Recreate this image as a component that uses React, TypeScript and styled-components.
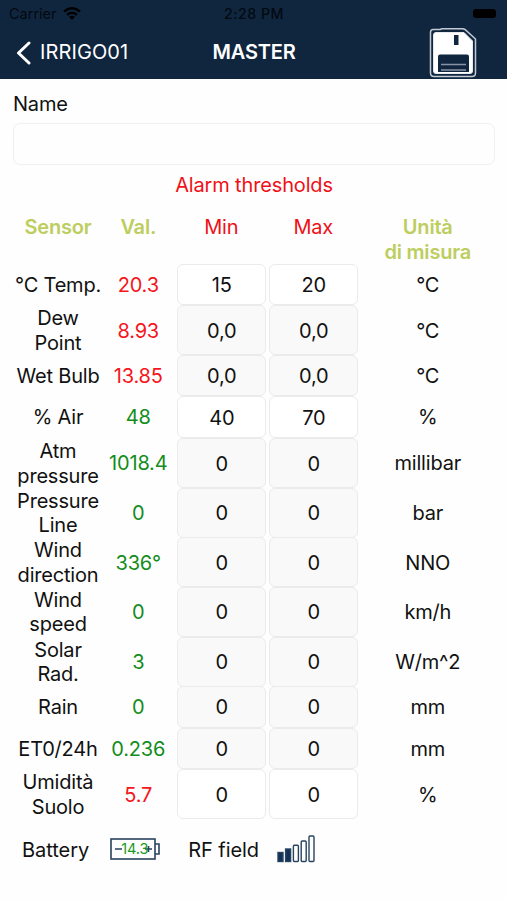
import React from "react";
import styled, { createGlobalStyle } from "styled-components";

const GlobalStyle = createGlobalStyle`
  * { box-sizing: border-box; }
  body {
    margin: 0;
    background: #fefefe;
    color: #111;
    font-family: Inter, "Liberation Sans", sans-serif;
    font-size: 20px;
    line-height: 24.6px;
    letter-spacing: -0.2px;
  }
`;

const Screen = styled.div`
  width: 507px;
  height: 900px;
  overflow: hidden;
  background: #fefefe;
`;

const Header = styled.header`
  height: 79px;
  background: #10263f;
`;

const StatusBar = styled.div`
  display: grid;
  grid-template-columns: 1fr auto 1fr;
  align-items: center;
  height: 26px;
  padding: 1px 8px 0 9px;
  color: #030910;
  font-size: 14.5px;
  line-height: 18px;
  letter-spacing: 0;
`;

const Carrier = styled.div`
  display: flex;
  align-items: center;
  gap: 6px;
`;

const Clock = styled.div`
  font-weight: 500;
  font-size: 14.2px;
  letter-spacing: 0.5px;
`;

const BatteryPill = styled.div`
  justify-self: end;
  width: 23px;
  height: 9px;
  margin-right: 3px;
  margin-top: -1px;
  border-radius: 3px;
  background: #000;
`;

const NavBar = styled.nav`
  display: grid;
  grid-template-columns: 1fr auto 1fr;
  align-items: center;
  height: 53px;
  padding: 0 30px 0 16px;
  color: #fff;
`;

const Back = styled.button`
  display: flex;
  align-items: center;
  gap: 9px;
  padding: 0;
  border: 0;
  background: none;
  color: inherit;
  font: inherit;
  letter-spacing: 0.1px;
`;

const Title = styled.h1`
  margin: 0 0 0 15px;
  font-size: 20px;
  font-weight: 600;
  letter-spacing: -0.2px;
`;

const SaveButton = styled.button`
  justify-self: end;
  display: flex;
  padding: 0;
  border: 0;
  background: none;
`;

const Form = styled.main`
  padding: 13px 12px 0 13px;
`;

const NameLabel = styled.label`
  display: block;
  height: 31px;
`;

const NameInput = styled.input`
  display: block;
  width: 100%;
  height: 42px;
  padding: 0 10px;
  border: 1px solid #f0f0f0;
  border-radius: 7px;
  background: #fefefe;
  font: inherit;
`;

const SectionTitle = styled.div`
  height: 50px;
  padding-top: 8px;
  text-align: center;
  color: #f01018;
  letter-spacing: -0.15px;
`;

const Row = styled.div<{ $h: number }>`
  display: grid;
  grid-template-columns: 90px 73.5px 92px 92px 134.5px;
  height: ${(p) => p.$h}px;
  align-items: center;
  text-align: center;
`;

const HeadRow = styled(Row)`
  align-items: start;
`;

const Heading = styled.div<{ $tone: "lime" | "red" }>`
  padding-right: ${(p) => (p.$tone === "red" ? "2.5px" : 0)};
  color: ${(p) => (p.$tone === "red" ? "#f01018" : "#bdcd5e")};
  font-weight: ${(p) => (p.$tone === "red" ? 400 : 600)};
  white-space: pre-line;
`;

const ValueHeading = styled(Heading)`
  padding-right: 3px;
`;

const Sensor = styled.div`
  padding-top: 1px;
  white-space: pre-line;
`;

const Value = styled.div<{ $alarm?: boolean }>`
  padding: 1px 3px 0 0;
  white-space: nowrap;
  color: ${(p) => (p.$alarm ? "#f5151b" : "#128d1a")};
`;

const Threshold = styled.input<{ $editable?: boolean }>`
  width: 89.5px;
  height: 100%;
  padding: 1px 0 0 1px;
  border: 1px solid #ebebeb;
  border-radius: 6px;
  background: ${(p) => (p.$editable ? "#fff" : "#f9f9f9")};
  color: #111;
  font: inherit;
  letter-spacing: inherit;
  text-align: center;
`;

const Unit = styled.div`
  padding-top: 1px;
`;

const Footer = styled.footer`
  display: flex;
  align-items: center;
  height: 60px;
  padding: 2px 0 0 9px;
  letter-spacing: -0.05px;
`;

const BatteryGauge = styled.div`
  display: grid;
  place-items: center start;
  margin: -2px 28px 0 21px;

  & > * { grid-area: 1 / 1; }
`;

const BatteryValue = styled.span`
  margin-left: 11px;
  color: #189a20;
  font-size: 14.5px;
  line-height: 20px;
`;

const Signal = styled.svg`
  margin: -2px 0 0 18px;
`;

type Reading = {
  name: string;
  value: string;
  min: string;
  max: string;
  unit: string;
  alarm?: boolean;
  editable?: boolean;
};

const readings: Reading[] = [
  { name: "°C Temp.", value: "20.3", min: "15", max: "20", unit: "°C", alarm: true, editable: true },
  { name: "Dew\nPoint", value: "8.93", min: "0,0", max: "0,0", unit: "°C", alarm: true },
  { name: "Wet Bulb", value: "13.85", min: "0,0", max: "0,0", unit: "°C", alarm: true },
  { name: "% Air", value: "48", min: "40", max: "70", unit: "%", editable: true },
  { name: "Atm\npressure", value: "1018.4", min: "0", max: "0", unit: "millibar" },
  { name: "Pressure\nLine", value: "0", min: "0", max: "0", unit: "bar" },
  { name: "Wind\ndirection", value: "336°", min: "0", max: "0", unit: "NNO" },
  { name: "Wind\nspeed", value: "0", min: "0", max: "0", unit: "km/h" },
  { name: "Solar\nRad.", value: "3", min: "0", max: "0", unit: "W/m^2" },
  { name: "Rain", value: "0", min: "0", max: "0", unit: "mm" },
  { name: "ET0/24h", value: "0.236", min: "0", max: "0", unit: "mm" },
  { name: "Umidità\nSuolo", value: "5.7", min: "0", max: "0", unit: "%", alarm: true, editable: true },
];

const WifiIcon = () => (
  <svg width="18" height="13" viewBox="0 0 18 13" fill="none" stroke="#000" strokeWidth="2.4">
    <path d="M1 4.6Q9-2.2 17 4.6" />
    <path d="M4 7.8Q9 3.6 14 7.8" />
    <path d="M6 9.8Q9 7.6 12 9.8L9 13Z" fill="#000" stroke="none" />
  </svg>
);

const ChevronIcon = () => (
  <svg width="15" height="24" viewBox="0 0 15 24" fill="none" stroke="#fff" strokeWidth="3" strokeLinecap="round" strokeLinejoin="round">
    <path d="M13 2L2.5 12L13 22" />
  </svg>
);

const FloppyIcon = () => (
  <svg width="48" height="50" viewBox="0 0 48 50">
    <path d="M4 1.500H11L13 0.800H34L36 1.500L46.500 11V45Q46.500 48.500 43 48.500H5Q1.500 48.500 1.500 45V4.500Q1.500 1.500 4 1.500Z" fill="#10263f" stroke="#c3cad4" strokeWidth="1.500" />
    <path d="M7 4.500H35L43.500 13V43Q43.500 45.500 41 45.500H7Q4.500 45.500 4.500 43V7Q4.500 4.500 7 4.500Z" fill="#fff" stroke="#e5e9ef" strokeWidth="1" />
    <rect x="25" y="7" width="4.500" height="10" fill="#10263f" />
    <path d="M9 44V28.500Q9 26.500 11 26.500H38Q40 26.500 40 28.500V44Z" fill="#10263f" />
    <path d="M12 36.500H37M12 42H37" stroke="#8792a3" strokeWidth="1.500" />
  </svg>
);

export default function App() {
  return (
    <Screen>
      <GlobalStyle />
      <Header>
        <StatusBar>
          <Carrier>Carrier <WifiIcon /></Carrier>
          <Clock>2:28 PM</Clock>
          <BatteryPill />
        </StatusBar>
        <NavBar>
          <Back><ChevronIcon />IRRIGO01</Back>
          <Title>MASTER</Title>
          <SaveButton aria-label="Save"><FloppyIcon /></SaveButton>
        </NavBar>
      </Header>
      <Form>
        <NameLabel htmlFor="name">Name</NameLabel>
        <NameInput id="name" />
        <SectionTitle>Alarm thresholds</SectionTitle>
        <HeadRow $h={48.7}>
          <Heading $tone="lime">Sensor</Heading>
          <ValueHeading $tone="lime">Val.</ValueHeading>
          <Heading $tone="red">Min</Heading>
          <Heading $tone="red">Max</Heading>
          <Heading $tone="lime">{"Unità\ndi misura"}</Heading>
        </HeadRow>
        {readings.map((r) => (
          <Row key={r.name} $h={r.name.includes("\n") ? 49.65 : 41.55}>
            <Sensor>{r.name}</Sensor>
            <Value $alarm={r.alarm}>{r.value}</Value>
            <Threshold $editable={r.editable} readOnly={!r.editable} defaultValue={r.min} />
            <Threshold $editable={r.editable} readOnly={!r.editable} defaultValue={r.max} />
            <Unit>{r.unit}</Unit>
          </Row>
        ))}
        <Footer>
          <span>Battery</span>
          <BatteryGauge>
            <svg width="50" height="22" viewBox="0 0 50 22" fill="none" stroke="#29435f" strokeWidth="1.600">
              <rect x="1" y="1" width="44" height="20" />
              <path d="M45 6H49V16H45" />
              <path d="M5 11H12M35 11H42M38.500 8V14" />
            </svg>
            <BatteryValue>14.3</BatteryValue>
          </BatteryGauge>
          <span>RF field</span>
          <Signal width="38" height="28" viewBox="0 0 38 28" fill="none" stroke="#29435f" strokeWidth="1.400">
            <rect x="1" y="17.500" width="5" height="9" fill="#10305a" />
            <rect x="8.600" y="14" width="5" height="12.500" fill="#10305a" />
            <rect x="16.400" y="10.200" width="5" height="16.300" rx="1" />
            <rect x="24.200" y="6" width="5" height="20.500" rx="1" />
            <rect x="32" y="1" width="5" height="25.500" rx="1" />
          </Signal>
        </Footer>
      </Form>
    </Screen>
  );
}
